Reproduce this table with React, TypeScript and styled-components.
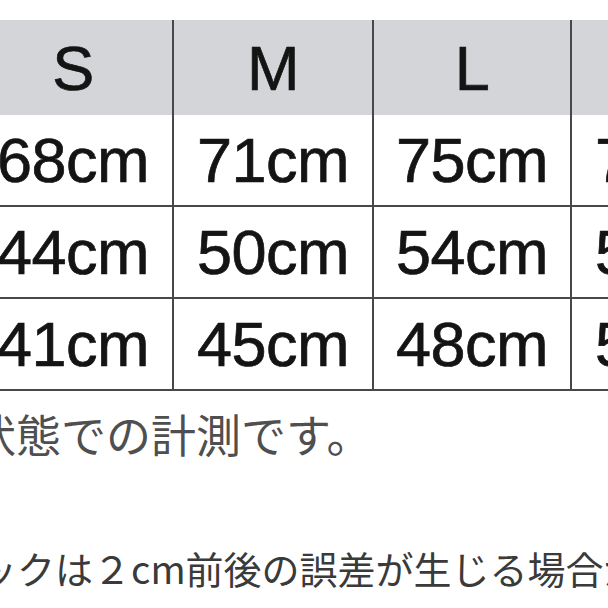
import React from "react";
import styled, { createGlobalStyle } from "styled-components";

const Global = createGlobalStyle`
  html, body {
    margin: 0;
    padding: 0;
    background: #ffffff;
    overflow: hidden;
  }
  body {
    width: 608px;
    height: 608px;
  }
`;

const Page = styled.div`
  width: 608px;
  height: 608px;
  overflow: hidden;
  padding-top: 20px;
  box-sizing: border-box;
  display: flex;
  flex-direction: column;
`;

const Table = styled.div`
  margin-left: -26px;
  display: flex;
  flex-direction: column;
  width: 798px;
`;

const Row = styled.div<{ $header?: boolean }>`
  display: grid;
  grid-template-columns: 200px 200px 198px 200px;
  height: ${(p) => (p.$header ? "95px" : "92px")};
  background: ${(p) => (p.$header ? "#d3d5d8" : "#ffffff")};
  border-bottom: ${(p) => (p.$header ? "none" : "2px solid #484848")};
  box-sizing: border-box;
`;

const Cell = styled.div`
  display: flex;
  align-items: center;
  justify-content: center;
  border-right: 2px solid #484848;
  box-sizing: border-box;
  font-family: "Liberation Sans", Arial, sans-serif;
  font-size: 63px;
  color: #141414;
  letter-spacing: -0.5px;
  -webkit-text-stroke: 0.7px #141414;
  white-space: nowrap;
`;

const Note = styled.p<{ $size: number; $indent: number; $gap: number; $color: string }>`
  margin: ${(p) => p.$gap}px 0 0 0;
  font-family: "Noto Sans CJK JP", "Noto Sans", sans-serif;
  font-size: ${(p) => p.$size}px;
  line-height: 1;
  color: ${(p) => p.$color};
  white-space: nowrap;
  text-indent: ${(p) => p.$indent}px;
`;

const sizes = ["S", "M", "L", "XL"];
const rows = [
  ["68cm", "71cm", "75cm", "79cm"],
  ["44cm", "50cm", "54cm", "58cm"],
  ["41cm", "45cm", "48cm", "52cm"],
];

export default function App() {
  return (
    <>
      <Global />
      <Page>
        <Table>
          <Row $header>
            {sizes.map((s) => (
              <Cell key={s}>{s}</Cell>
            ))}
          </Row>
          {rows.map((r, i) => (
            <Row key={i}>
              {r.map((v, j) => (
                <Cell key={j}>{v}</Cell>
              ))}
            </Row>
          ))}
        </Table>
        <Note $size={45} $indent={-29} $gap={20} $color="#4f4f4f">
          状態での計測です。
        </Note>
        <Note $size={38} $indent={-21} $gap={93} $color="#3a3a3a">
          ックは２cm前後の誤差が生じる場合があります。
        </Note>
      </Page>
    </>
  );
}
